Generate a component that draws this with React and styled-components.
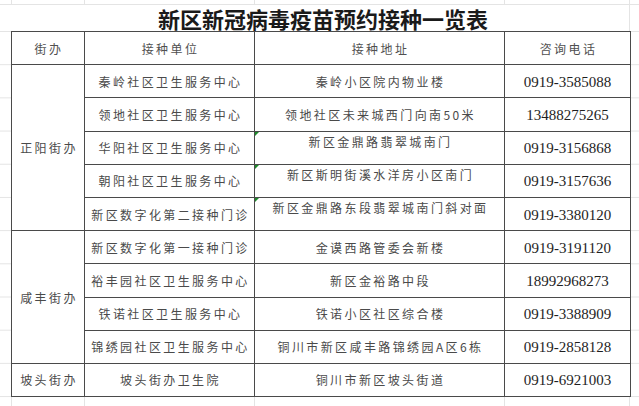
import styled, { createGlobalStyle } from 'styled-components'

const GlobalStyle = createGlobalStyle`
  html, body {
    margin: 0;
    height: 100%;
  }
  body {
    background-color: #fff;
    background-image:
      linear-gradient(#e4e4e4, #e4e4e4),
      linear-gradient(#e4e4e4, #e4e4e4),
      linear-gradient(#e4e4e4, #e4e4e4),
      linear-gradient(#e4e4e4, #e4e4e4),
      linear-gradient(#e4e4e4, #e4e4e4),
      linear-gradient(#e4e4e4, #e4e4e4),
      linear-gradient(to bottom, #e4e4e4 1px, transparent 1px);
    background-size: 1px 100%, 1px 100%, 1px 100%, 1px 100%, 1px 100%, 100% 1px, 100% 33.2px;
    background-position: 11px 0, 84px 0, 254px 0, 504px 0, 629px 0, 0 4px, 0 -2.2px;
    background-repeat: no-repeat, no-repeat, no-repeat, no-repeat, no-repeat, no-repeat, repeat;
  }
`

const Sheet = styled.div`
  display: flex;
  flex-direction: column;
  padding-top: 5px;
  padding-left: 11px;
  font-family: "Noto Sans CJK SC", sans-serif;
`

const Title = styled.div`
  width: 618px;
  height: 26px;
  background: #fff;
  display: flex;
  align-items: flex-end;
  justify-content: center;
  font-size: 22px;
  line-height: 26px;
  font-weight: 700;
  color: #1a1a1a;
  padding-left: 6px;
  box-sizing: border-box;
`

const Table = styled.table`
  width: 619px;
  border-collapse: collapse;
  table-layout: fixed;
  background: #fff;
`

const Row = styled.tr`
  height: 33.2px;
`

const Cell = styled.td`
  position: relative;
  border: 1px solid #4a4a4a;
  padding: ${p => (p.$raised ? '2px 0 0 2px' : '0 0 0 2px')};
  vertical-align: ${p => (p.$raised ? 'top' : 'middle')};
  text-align: center;
  font-size: 12px;
  line-height: 15px;
  letter-spacing: 2.4px;
  color: #4a4a4a;
  white-space: nowrap;
  overflow: hidden;
`

const HeadCell = styled(Cell).attrs({ as: 'th' })`
  font-weight: 400;
  color: #505050;
`

const Phone = styled(Cell)`
  font-family: "Liberation Serif", serif;
  font-size: 15px;
  letter-spacing: 0;
  color: #1e1e1e;
  padding: 2px 0 0 0;
`

const Marker = styled.span`
  position: absolute;
  left: 0;
  top: 0;
  width: 0;
  height: 0;
  border-top: 4px solid #1f8a2c;
  border-right: 4px solid transparent;
`

const rows = [
  { district: '正阳街办', span: 5, unit: '秦岭社区卫生服务中心', address: '秦岭小区院内物业楼', phone: '0919-3585088' },
  { unit: '领地社区卫生服务中心', address: '领地社区未来城西门向南50米', phone: '13488275265' },
  { unit: '华阳社区卫生服务中心', address: '新区金鼎路翡翠城南门', phone: '0919-3156868', raised: true },
  { unit: '朝阳社区卫生服务中心', address: '新区斯明街溪水洋房小区南门', phone: '0919-3157636', raised: true },
  { unit: '新区数字化第二接种门诊', address: '新区金鼎路东段翡翠城南门斜对面', phone: '0919-3380120', raised: true },
  { district: '咸丰街办', span: 4, unit: '新区数字化第一接种门诊', address: '金谟西路管委会新楼', phone: '0919-3191120' },
  { unit: '裕丰园社区卫生服务中心', address: '新区金裕路中段', phone: '18992968273' },
  { unit: '铁诺社区卫生服务中心', address: '铁诺小区社区综合楼', phone: '0919-3388909' },
  { unit: '锦绣园社区卫生服务中心', address: '铜川市新区咸丰路锦绣园A区6栋', phone: '0919-2858128' },
  { district: '坡头街办', span: 1, unit: '坡头街办卫生院', address: '铜川市新区坡头街道', phone: '0919-6921003' },
]

const App = () => (
  <>
    <GlobalStyle />
    <Sheet>
      <Title>新区新冠病毒疫苗预约接种一览表</Title>
      <Table>
        <colgroup>
          <col style={{ width: 73 }} />
          <col style={{ width: 170 }} />
          <col style={{ width: 250 }} />
          <col style={{ width: 126 }} />
        </colgroup>
        <thead>
          <Row>
            <HeadCell>街办</HeadCell>
            <HeadCell>接种单位</HeadCell>
            <HeadCell>接种地址</HeadCell>
            <HeadCell>咨询电话</HeadCell>
          </Row>
        </thead>
        <tbody>
          {rows.map(r => (
            <Row key={r.unit}>
              {r.district && <Cell rowSpan={r.span}>{r.district}</Cell>}
              <Cell>{r.unit}</Cell>
              <Cell $raised={r.raised}>
                {r.raised && <Marker />}
                {r.address}
              </Cell>
              <Phone>{r.phone}</Phone>
            </Row>
          ))}
        </tbody>
      </Table>
    </Sheet>
  </>
)

export default App
